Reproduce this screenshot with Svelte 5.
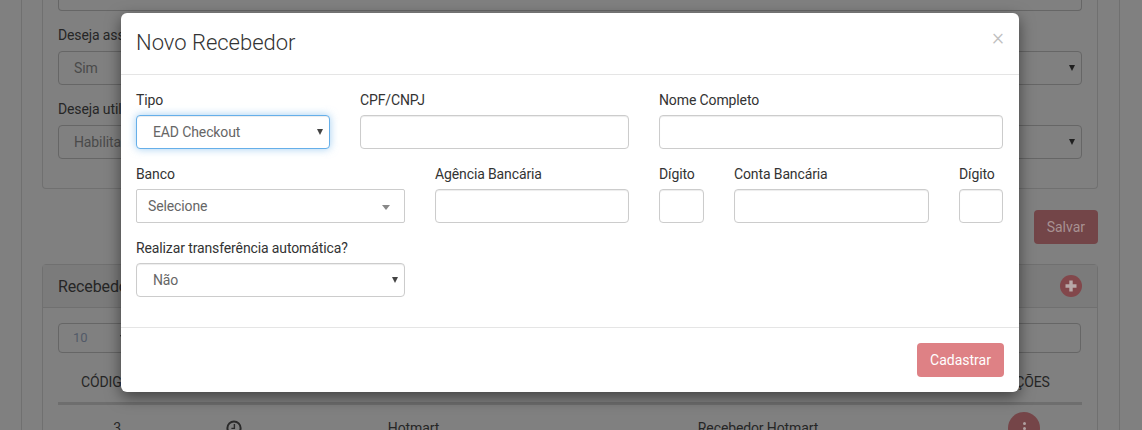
<script>
	const rows = [
		[
			{ label: 'Tipo', kind: 'select', value: 'EAD Checkout', focus: true },
			{ label: 'CPF/CNPJ' },
			{ label: 'Nome Completo' }
		],
		[
			{ label: 'Banco', kind: 'select2', value: 'Selecione' },
			{ label: 'Agência Bancária' },
			{ label: 'Dígito' },
			{ label: 'Conta Bancária' },
			{ label: 'Dígito' }
		],
		[{ label: 'Realizar transferência automática?', kind: 'select', value: 'Não' }]
	];
</script>

<div class="page">
	<!-- page behind the modal, already dimmed by the backdrop -->
	<div class="frame">
		<section class="panel first">
			<input class="field top-field" />
			<label class="bg-label" for="assinar">Deseja assinar</label>
			<span class="sel"><select id="assinar" class="bg-select"><option>Sim</option></select></span>
			<label class="bg-label" for="utilizar">Deseja utilizar</label>
			<span class="sel"><select id="utilizar" class="bg-select"><option>Habilitado</option></select></span>
		</section>
		<div class="save-row"><button class="btn save">Salvar</button></div>
		<section class="panel second">
			<header class="panel-head">
				<span>Recebedores</span>
				<span class="plus">
					<svg viewBox="0 0 22 22" width="22" height="22">
						<path d="M11 5.5v11M5.5 11h11" stroke="#b8a8a8" stroke-width="3.4" />
					</svg>
				</span>
			</header>
			<div class="tools">
				<span class="sel small"><select class="per-page"><option>10</option></select></span>
				<input class="field search" />
			</div>
			<div class="table-row heads">
				<span class="h-code">CÓDIGO</span><span>STATUS</span><span>NOME</span><span>RECEBEDOR</span><span class="h-act">AÇÕES</span>
			</div>
			<div class="table-row body-row">
				<span>3</span>
				<span class="clock">
					<svg viewBox="0 0 16 16" width="16" height="16" fill="none" stroke="#2a2a2a" stroke-width="2">
						<circle cx="8" cy="8" r="6.6" />
						<path d="M8.4 4v4.4H5.4" stroke-width="1.4" />
					</svg>
				</span>
				<span>Hotmart</span>
				<span>Recebedor Hotmart</span>
				<span class="action"><i></i><i></i><i></i></span>
			</div>
		</section>
	</div>

	<div class="modal">
		<header class="modal-head">
			<h4>Novo Recebedor</h4>
			<span class="close">×</span>
		</header>
		<div class="modal-body">
			{#each rows as row, r}
				<div class="row row-{r}">
					{#each row as f}
						<div class="group">
							<span class="label">{f.label}</span>
							{#if f.kind === 'select'}
								<span class="sel"><select class="control native" class:focus={f.focus}><option>{f.value}</option></select></span>
							{:else if f.kind === 'select2'}
								<div class="control fake">
									<span>{f.value}</span>
									<b></b>
								</div>
							{:else}
								<input class="control" />
							{/if}
						</div>
					{/each}
				</div>
			{/each}
		</div>
		<footer class="modal-foot">
			<button class="btn submit">Cadastrar</button>
		</footer>
	</div>
</div>

<style>
	:global(body) {
		margin: 0;
		background: #808080;
	}
	.page {
		position: relative;
		height: 430px;
		overflow: hidden;
		font-family: Roboto, sans-serif;
		font-size: 14px;
		letter-spacing: -0.12px;
		color: #262626;
	}
	.frame {
		margin: 0 22px 0 21px;
		height: 430px;
		padding: 0 21px 0 20px;
		box-sizing: border-box;
		border-left: 1px solid #707070;
		border-right: 1px solid #707070;
	}
	.panel {
		border: 1px solid #707070;
		border-radius: 4px;
		box-sizing: border-box;
	}
	.first {
		height: 189px;
		padding: 0 15px;
		border-top: 0;
		border-radius: 0 0 4px 4px;
		display: flex;
		flex-direction: column;
	}
	.field,
	.bg-select,
	.per-page {
		display: block;
		box-sizing: border-box;
		border: 1px solid #666;
		border-radius: 4px;
		background: #808080;
		font: 14px Roboto, sans-serif;
		letter-spacing: -0.12px;
		color: #4a4a4a;
		padding: 6px 12px;
		appearance: none;
	}
	.top-field {
		height: 11px;
		width: 1024px;
		border-top: 0;
		border-radius: 0 0 4px 4px;
		padding: 0;
	}
	.bg-label {
		margin: 14px 0 6px;
		line-height: 20px;
	}
	.bg-select {
		width: 100%;
		height: 34px;
		padding-left: 15px;
	}
	.sel {
		display: block;
		position: relative;
	}
	.sel::after {
		content: '';
		position: absolute;
		right: 7px;
		top: 50%;
		margin-top: -3px;
		border-style: solid;
		border-width: 6px 3px 0;
		border-color: #444 transparent transparent;
		pointer-events: none;
	}
	.frame .sel::after {
		border-top-color: #1f1f1f;
	}
	.save-row {
		display: flex;
		justify-content: flex-end;
		padding-top: 21px;
		height: 55px;
		box-sizing: border-box;
		margin-bottom: 20px;
	}
	.btn {
		border: 0;
		border-radius: 4px;
		background: #de8185;
		color: #fff;
		font: 14px/20px Roboto, sans-serif;
		height: 34px;
		padding: 0 13px;
	}
	.save {
		background: #734548;
		color: #a89292;
	}
	.second {
		height: 190px;
	}
	.panel-head {
		height: 43px;
		box-sizing: border-box;
		padding: 0 15px;
		background: #7b7b7b;
		border-bottom: 1px solid #707070;
		display: flex;
		align-items: center;
		justify-content: space-between;
		font-size: 16px;
	}
	.plus {
		width: 22px;
		height: 22px;
		border-radius: 50%;
		background: #82474b;
		display: block;
	}
	.plus svg {
		display: block;
	}
	.tools {
		display: flex;
		justify-content: space-between;
		padding: 15px 16px 0 15px;
	}
	.small {
		width: 75px;
	}
	.per-page {
		width: 75px;
		height: 30px;
		padding: 3px 14px 5px;
		font-size: 13px;
		color: #525a68;
	}
	.search {
		width: 400px;
		height: 30px;
	}
	.table-row {
		display: grid;
		grid-template-columns: 118px 116px 243px 446px 86px;
		margin: 0 0 0 15px;
		width: 1024px;
		text-align: center;
	}
	.heads {
		margin-top: 19px;
		height: 30px;
		line-height: 20px;
		border-bottom: 3px solid #6e6e6e;
	}
	.h-code {
		padding-right: 22px;
	}
	.h-act {
		padding-left: 8px;
	}
	.body-row {
		padding-top: 13px;
		line-height: 20px;
	}
	.clock {
		display: flex;
		justify-content: center;
		padding-top: 2px;
	}
	.action {
		width: 32px;
		height: 32px;
		border-radius: 50%;
		background: #754548;
		justify-self: center;
		margin-top: -6px;
		display: flex;
		flex-direction: column;
		align-items: center;
		justify-content: center;
		gap: 2px;
	}
	.action i {
		width: 3px;
		height: 3px;
		background: #b0a0a0;
		border-radius: 50%;
	}
	.modal {
		position: absolute;
		left: 121px;
		top: 13px;
		width: 898px;
		height: 379px;
		background: #fff;
		border-radius: 6px;
		box-shadow: 0 5px 15px rgba(0, 0, 0, 0.5);
		display: flex;
		flex-direction: column;
		color: #333;
	}
	.modal-head {
		height: 62px;
		box-sizing: border-box;
		border-bottom: 1px solid #e5e5e5;
		display: flex;
		justify-content: space-between;
		padding: 15px 15px 0 15px;
	}
	h4 {
		margin: 0;
		font-size: 22px;
		font-weight: 300;
		line-height: 30px;
		letter-spacing: 0;
		color: #333;
	}
	.close {
		font-size: 23px;
		font-weight: 300;
		line-height: 19px;
		color: #000;
		opacity: 0.25;
	}
	.modal-body {
		flex: 1;
		padding: 15px 16px 0 15px;
	}
	.row {
		display: grid;
		column-gap: 30px;
		margin-bottom: 15px;
	}
	.row-0 {
		grid-template-columns: 194px 269px 344px;
	}
	.row-1 {
		grid-template-columns: 269px 194px 45px 195px 44px;
	}
	.row-2 {
		grid-template-columns: 269px;
	}
	.label {
		display: block;
		line-height: 20px;
		margin-bottom: 5px;
	}
	.control {
		display: block;
		box-sizing: border-box;
		width: 100%;
		height: 34px;
		border: 1px solid #ccc;
		border-radius: 4px;
		background: #fff;
		box-shadow: inset 0 1px 1px rgba(0, 0, 0, 0.075);
		font: 14px Roboto, sans-serif;
		letter-spacing: -0.12px;
		color: #666;
		padding: 6px 12px;
		outline: 0;
	}
	.control.native {
		appearance: none;
		padding-left: 16px;
	}
	.control.focus {
		border-color: #66afe9;
		box-shadow: inset 0 1px 1px rgba(0, 0, 0, 0.075), 0 0 8px rgba(102, 175, 233, 0.6);
	}
	.fake {
		display: flex;
		align-items: center;
		justify-content: space-between;
		padding: 0 14px 0 11px;
		border-radius: 2px;
		box-shadow: none;
	}
	.fake b {
		border-style: solid;
		border-width: 5px 4px 0;
		border-color: #888 transparent transparent;
		margin-top: 2px;
	}
	.modal-foot {
		height: 65px;
		box-sizing: border-box;
		border-top: 1px solid #e5e5e5;
		display: flex;
		justify-content: flex-end;
		padding: 15px 15px 0 0;
	}
	.submit {
		width: 87px;
		padding: 0;
	}
</style>
